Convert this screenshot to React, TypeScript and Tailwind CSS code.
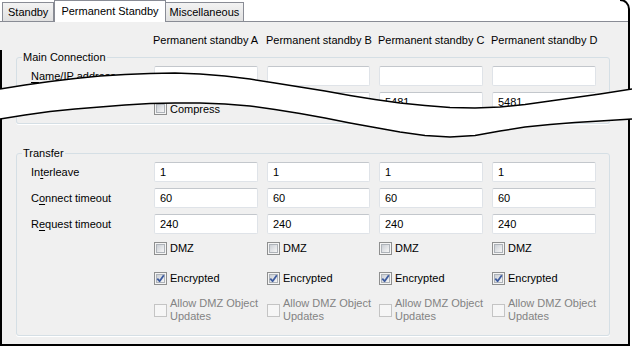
import React from 'react'

const topEdge = [
  [0, 89], [25, 85], [50, 81.5], [75, 78.5], [100, 76], [125, 74.5], [150, 73.5], [175, 73],
  [200, 74], [225, 76], [250, 79], [275, 83], [300, 87], [325, 91], [350, 95.5], [375, 99.5],
  [400, 103], [425, 105.5], [450, 107.5], [475, 108], [500, 107], [525, 104.5], [550, 101],
  [575, 97.5], [600, 94], [632, 89],
]

const bottomEdge = [
  [0, 119], [25, 115], [50, 111.5], [75, 109], [100, 107], [125, 105], [150, 103.5], [175, 103],
  [200, 103], [225, 104], [250, 106], [275, 109.5], [300, 113.5], [325, 118], [350, 123],
  [375, 127.5], [400, 132], [425, 135.5], [450, 137], [475, 135.5], [500, 131], [525, 127],
  [550, 124.5], [575, 122.5], [600, 121], [632, 119],
]

const pts = (list: number[][]) => list.map(([x, y]) => `${x},${y}`).join(' ')

function Checkbox({ checked = false, disabled = false }: { checked?: boolean; disabled?: boolean }) {
  return (
    <span
      className={`relative inline-block w-[13px] h-[13px] shrink-0 border ${
        disabled ? 'border-[#c4c4c4] bg-[#f6f6f6]' : 'border-[#8e8f8f] bg-[#f4f4f4]'
      }`}
    >
      {!disabled && (
        <span className="absolute left-[1px] top-[1px] w-[9px] h-[9px] border border-[#aeb3b9] bg-linear-to-br from-[#cbcfd5] to-[#f6f6f6]" />
      )}
      {checked && (
        <svg className="absolute left-0 top-0" width="11" height="11" viewBox="0 0 11 11">
          <path d="M2.3 5.6 L4.6 8.2 L8.8 2.2" fill="none" stroke="#3d5b9e" strokeWidth="1.8" strokeLinejoin="round" />
        </svg>
      )}
    </span>
  )
}

function TextBox({ value = '' }: { value?: string }) {
  return (
    <div className="h-[20px] bg-white border border-[#dfe3e8] border-t-[#c3c7cc] rounded-[2px] pl-[5px] flex items-center">
      {value}
    </div>
  )
}

function Label({ before, key1, after }: { before: string; key1: string; after: string }) {
  return (
    <div className="flex items-center h-[20px] whitespace-nowrap">
      <span>
        {before}
        <span className="underline underline-offset-[2px]">{key1}</span>
        {after}
      </span>
    </div>
  )
}

const cols = 'grid grid-cols-[114px_104px_103px_104px_104px] gap-x-[9px]'

function CheckRow({ children, checked, disabled }: { children: React.ReactNode; checked?: boolean; disabled?: boolean }) {
  return (
    <div className={cols}>
      <div />
      {[0, 1, 2, 3].map((i) => (
        <div key={i} className="flex items-center gap-[3px]">
          <Checkbox checked={checked} disabled={disabled} />
          <span className={`leading-[13px] whitespace-nowrap ${disabled ? 'text-[#838383]' : ''}`}>{children}</span>
        </div>
      ))}
    </div>
  )
}

export default function App() {
  return (
    <div className="relative w-[632px] h-[347px] bg-white overflow-hidden text-[11px] leading-[14px] text-black font-['Liberation_Sans',Arial,sans-serif]">
      {/* top part of the torn dialog */}
      <div className="w-[629px] h-[112px] overflow-hidden">
        <div className="relative z-10 flex items-end h-[21px] pl-[2px] whitespace-nowrap">
          <div className="h-[19px] px-[5px] pt-[2px] border border-b-0 border-[#898c95] bg-linear-to-b from-[#f3f3f3] to-[#e1e1e1]">
            Standby
          </div>
          <div className="h-[22px] -mb-[1px] px-[6px] pt-[3px] border border-b-0 border-[#898c95] bg-white">
            Permanent Standby
          </div>
          <div className="h-[19px] px-[4px] pt-[2px] border border-b-0 border-l-0 border-[#898c95] bg-linear-to-b from-[#f3f3f3] to-[#e1e1e1]">
            Miscellaneous
          </div>
        </div>
        <div className="h-[200px] bg-[#f0f0f0] border-t border-[#898c95] px-[16px]">
          <div className={`${cols} mt-[11px] pl-[15px] whitespace-nowrap`}>
            <div />
            <div className="-ml-[1px]">Permanent standby A</div>
            <div className="-ml-[1px]">Permanent standby B</div>
            <div className="-ml-[1px]">Permanent standby C</div>
            <div className="-ml-[1px]">Permanent standby D</div>
          </div>
          <fieldset className="mt-[3px] w-[594px] h-[120px] border border-[#d5dfe5] rounded-[3px] pl-[14px] pt-[2px]">
            <legend className="ml-[-9px] px-[1px] leading-[14px]">Main Connection</legend>
            <div className="flex flex-col gap-y-[6px]">
              <div className={cols}>
                <Label before="" key1="N" after="ame/IP address" />
                <TextBox />
                <TextBox />
                <TextBox />
                <TextBox />
              </div>
              <div className={cols}>
                <div />
                <TextBox value="5481" />
                <TextBox value="5481" />
                <TextBox value="5481" />
                <TextBox value="5481" />
              </div>
            </div>
          </fieldset>
        </div>
      </div>

      {/* bottom part of the torn dialog */}
      <div className="-mt-[14px] w-[629px] h-[247px] bg-[#f0f0f0] px-[16px] [clip-path:polygon(0px_21px,25px_17px,50px_13.5px,75px_11px,100px_9px,125px_7px,150px_5.5px,175px_5px,200px_5px,225px_6px,250px_8px,275px_11.5px,300px_15.5px,325px_20px,350px_25px,375px_29.5px,400px_34px,425px_37.5px,450px_39px,475px_37.5px,500px_33px,525px_29px,550px_26.5px,575px_24.5px,600px_23px,629px_21px,629px_100%,0px_100%)]">
        <div className="w-[594px] h-[26px] border-x border-b border-[#d5dfe5] rounded-b-[3px] pl-[14px] pt-[4px] shadow-[0_1px_0_#fff]">
          <div className={cols}>
            <div />
            <div className="flex items-center gap-[3px] h-[13px]">
              <Checkbox />
              <span>Compress</span>
            </div>
          </div>
        </div>
        <fieldset className="mt-[22px] w-[594px] border border-[#d5dfe5] rounded-[3px] pl-[14px] pt-[2px] pb-[12px] shadow-[0_1px_0_#fff]">
          <legend className="ml-[-9px] px-[1px] leading-[14px]">Transfer</legend>
          <div className="flex flex-col gap-y-[6px]">
            <div className={cols}>
              <Label before="In" key1="t" after="erleave" />
              <TextBox value="1" />
              <TextBox value="1" />
              <TextBox value="1" />
              <TextBox value="1" />
            </div>
            <div className={cols}>
              <Label before="C" key1="o" after="nnect timeout" />
              <TextBox value="60" />
              <TextBox value="60" />
              <TextBox value="60" />
              <TextBox value="60" />
            </div>
            <div className={cols}>
              <Label before="R" key1="e" after="quest timeout" />
              <TextBox value="240" />
              <TextBox value="240" />
              <TextBox value="240" />
              <TextBox value="240" />
            </div>
          </div>
          <div className="mt-[8px] h-[13px] flex flex-col justify-center">
            <CheckRow>DMZ</CheckRow>
          </div>
          <div className="mt-[17px] h-[13px] flex flex-col justify-center">
            <CheckRow checked>Encrypted</CheckRow>
          </div>
          <div className="mt-[12px]">
            <CheckRow disabled>
              Allow DMZ Object
              <br />
              Updates
            </CheckRow>
          </div>
        </fieldset>
      </div>

      {/* torn edges and outline */}
      <svg className="absolute left-0 top-0 pointer-events-none" width="632" height="347" viewBox="0 0 632 347">
        <polygon points={pts([...topEdge, ...[...bottomEdge].reverse()])} fill="#fff" />
        <polyline points={pts(topEdge)} fill="none" stroke="#000" strokeWidth="1.5" />
        <polyline points={pts(bottomEdge)} fill="none" stroke="#000" strokeWidth="1.5" />
        <path d="M620 0 A9 9 0 0 1 629 9" fill="none" stroke="#000" strokeWidth="2" />
        <line x1="629" y1="9" x2="629" y2="89" stroke="#000" strokeWidth="2" />
        <path d="M629 119 L629 345 L1 345 L1 119" fill="none" stroke="#000" strokeWidth="2" />
        <line x1="1" y1="50" x2="1" y2="89" stroke="#000" strokeWidth="2" />
      </svg>
    </div>
  )
}
